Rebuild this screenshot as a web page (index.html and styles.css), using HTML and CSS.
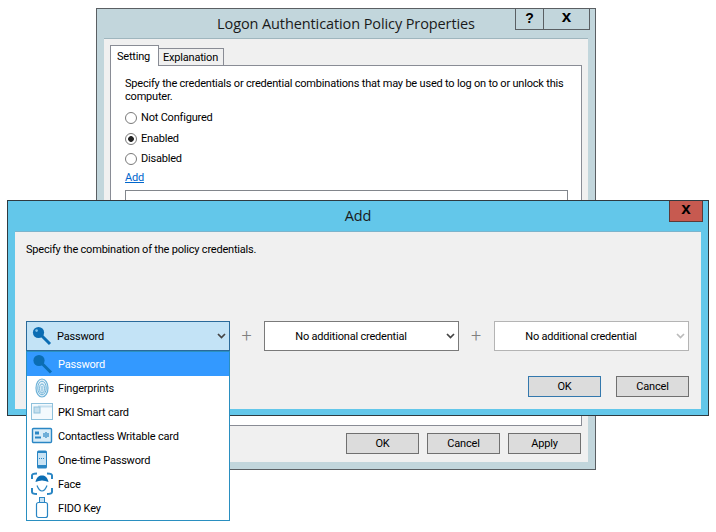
FILE: index.html
```html
<!DOCTYPE html>
<html lang="en">
<head>
<meta charset="utf-8">
<title>Logon Authentication Policy Properties</title>
<link rel="stylesheet" href="styles.css">
</head>
<body>
<div class="window window-back">
  <div class="titlebar titlebar-back">
    <span class="title">Logon Authentication Policy Properties</span>
    <div class="caption-buttons">
      <span class="caption-btn caption-help">?</span>
      <span class="caption-btn caption-close">x</span>
    </div>
  </div>
  <div class="panel panel-back">
    <div class="tabs">
      <span class="tab tab-active">Setting</span>
      <span class="tab">Explanation</span>
    </div>
    <div class="tab-body">
      <p class="desc">Specify the credentials or credential combinations that may be used to log on to or unlock this computer.</p>
      <div class="radio-row first"><span class="radio"></span>Not Configured</div>
      <div class="radio-row"><span class="radio radio-on"></span>Enabled</div>
      <div class="radio-row tight"><span class="radio"></span>Disabled</div>
      <a class="link" href="#">Add</a>
      <div class="listbox"></div>
    </div>
    <div class="footer footer-back">
      <button class="btn">OK</button>
      <button class="btn">Cancel</button>
      <button class="btn">Apply</button>
    </div>
  </div>
</div>

<div class="window window-add">
  <div class="titlebar titlebar-add">
    <span class="title">Add</span>
    <span class="add-close">x</span>
  </div>
  <div class="panel panel-add">
    <p class="add-desc">Specify the combination of the policy credentials.</p>
    <div class="combo-row">
      <div class="combo combo-open">
        <svg class="combo-key" width="20" height="20" viewBox="0 0 20 20"><circle cx="6.5" cy="6.5" r="5.6" fill="#0b6db3"/><circle cx="4.6" cy="4.6" r="1.3" fill="#7fc0e8"/><path d="M9.5 9.5L18 18" stroke="#0b6db3" stroke-width="3" fill="none"/></svg>
        <span class="combo-label">Password</span>
        <svg class="chev" width="9" height="6" viewBox="0 0 9 6"><path d="M1 1l3.500 3.500L8 1" stroke="#444" stroke-width="1.700" fill="none"/></svg>
        <ul class="dropdown">
          <li class="opt opt-selected">
            <span class="opt-icon"><svg width="24" height="24" viewBox="0 0 24 24"><circle cx="9" cy="8.500" r="5.600" fill="#0b6db3"/><path d="M12 11.500l9 9" stroke="#0b6db3" stroke-width="3" fill="none"/></svg></span>
            Password
          </li>
          <li class="opt">
            <span class="opt-icon"><svg width="24" height="24" viewBox="0 0 24 24" fill="none" stroke="#6fb3d8"><ellipse cx="12" cy="12" rx="6" ry="9" fill="#e4f1f9" stroke-width="1.200"/><ellipse cx="12" cy="12" rx="4.200" ry="6.800" stroke-width="1"/><ellipse cx="12" cy="12.500" rx="2.400" ry="4.500" stroke-width="1"/><path d="M12 10v5.500" stroke-width="1"/></svg></span>
            Fingerprints
          </li>
          <li class="opt">
            <span class="opt-icon"><svg width="24" height="24" viewBox="0 0 24 24"><rect x="1.500" y="3.500" width="21" height="16" fill="#f3f9fd" stroke="#8fc1dc"/><path d="M8 6.500h14" stroke="#c5dfee" stroke-width="2"/><rect x="4" y="7" width="6" height="6" fill="#c5dfee" stroke="#8fc1dc"/></svg></span>
            PKI Smart card
          </li>
          <li class="opt">
            <span class="opt-icon"><svg width="24" height="24" viewBox="0 0 24 24"><rect x="2.500" y="4.500" width="19" height="14" rx="1" fill="#d9ecf8" stroke="#2a86c4" stroke-width="1.400"/><rect x="5" y="7.500" width="4" height="3" fill="#2a86c4"/><path d="M5 13.500h6" stroke="#2a86c4" stroke-width="2"/><path d="M14 9v4M16 8v6M18 9v4" stroke="#2a86c4" stroke-width="1.200"/></svg></span>
            Contactless Writable card
          </li>
          <li class="opt">
            <span class="opt-icon"><svg width="24" height="24" viewBox="0 0 24 24"><rect x="7" y="2.500" width="10" height="18" rx="1.500" fill="#2a86c4"/><rect x="8" y="5" width="8" height="12" fill="#c9e3f4"/><path d="M9 10.500h6" stroke="#2a86c4" stroke-dasharray="1 1"/></svg></span>
            One-time Password
          </li>
          <li class="opt">
            <span class="opt-icon"><svg width="24" height="24" viewBox="0 0 24 24" fill="none"><path d="M2 7V3.500C2 2.500 3 1.500 7 1.500M17 1.500C21 1.500 22 2.500 22 3.500V7M2 16V20C2 21 3 22 7 22M17 22C21 22 22 21 22 20V16" stroke="#2a86c4" stroke-width="2"/><path d="M5.500 10C6.500 5 9 3.500 12 3.500S17.500 5 18.500 10C14 8 10 8 5.500 10Z" fill="#0b6db3"/><path d="M7 13.500C8.500 17.500 10 19 12 19S15.500 17.500 17 13.500" stroke="#2a86c4" stroke-width="1.200"/></svg></span>
            Face
          </li>
          <li class="opt">
            <span class="opt-icon"><svg width="24" height="24" viewBox="0 0 24 24" fill="none" stroke="#2a86c4"><rect x="9.500" y="1.500" width="5" height="5" fill="#c9e3f4"/><rect x="6.500" y="6.500" width="11" height="15" rx="2" fill="#fff" stroke-width="1.200"/></svg></span>
            FIDO Key
          </li>
        </ul>
      </div>
      <span class="plus">+</span>
      <div class="combo combo-plain">
        <span class="combo-center">No additional credential</span>
        <svg class="chev" width="9" height="6" viewBox="0 0 9 6"><path d="M1 1l3.500 3.500L8 1" stroke="#444" stroke-width="1.700" fill="none"/></svg>
      </div>
      <span class="plus">+</span>
      <div class="combo combo-plain combo-disabled">
        <span class="combo-center">No additional credential</span>
        <svg class="chev" width="9" height="6" viewBox="0 0 9 6"><path d="M1 1l3.500 3.500L8 1" stroke="#bbb" stroke-width="1.700" fill="none"/></svg>
      </div>
    </div>
    <div class="footer footer-add">
      <button class="btn btn-default">OK</button>
      <button class="btn">Cancel</button>
    </div>
  </div>
</div>
</body>
</html>
```

FILE: styles.css
```css
* { box-sizing: border-box; }
html, body { margin: 0; padding: 0; }
body {
  width: 716px;
  height: 532px;
  background: #fff;
  position: relative;
  overflow: hidden;
  font-family: "Roboto", "Liberation Sans", sans-serif;
  font-size: 11px;
  letter-spacing: -0.2px;
  color: #000;
}
.window { position: absolute; display: flex; flex-direction: column; }
.window-back {
  left: 96px; top: 8px; width: 500px; height: 462px;
  background: #c2d6dc;
  border: 1px solid #5a5f63;
  padding: 0 7px 7px;
}
.window-add {
  left: 7px; top: 200px; width: 702px; height: 216px;
  background: #63c7ea;
  border: 1px solid #2f3a40;
  padding: 0 7px 7px;
}
.titlebar { position: relative; display: flex; justify-content: center; align-items: center; flex: none; }
.titlebar-back { height: 29px; }
.titlebar-add { height: 30px; padding-bottom: 2px; }
.title { font-family: "Open Sans", sans-serif; font-size: 14.5px; letter-spacing: -0.1px; color: #1a1a1a; }
.caption-buttons {
  position: absolute; right: -2px; top: -1px;
  display: flex; height: 22px;
  border: 1px solid #5a5f63; border-top: 0;
}
.caption-btn { display: flex; align-items: center; justify-content: center; font-family: "Liberation Sans", sans-serif; font-weight: 700; font-size: 14px; letter-spacing: 0; }
.caption-help { width: 28px; border-right: 1px solid #5a5f63; padding-bottom: 2px; }
.caption-close { width: 45px; padding-bottom: 4px; font-size: 17px; }
.add-close {
  position: absolute; right: -2px; top: 0; width: 34px; height: 21px;
  background: #c75a50; border: 1px solid #5c3a38; border-top: 0;
  display: flex; align-items: center; justify-content: center;
  font-family: "Liberation Sans", sans-serif; font-weight: 700; font-size: 17px; padding-bottom: 4px; letter-spacing: 0;
}
.panel { flex: 1; background: #f0f0f0; display: flex; flex-direction: column; border-top: 1px solid #9fb6be; }
.panel-add { border-top-color: #7cb4cc; padding: 11px 12px 12px 11px; }
.panel-back { padding: 7px 6px 8px; }
.tabs { display: flex; align-items: flex-end; height: 20px; flex: none; position: relative; z-index: 1; margin-bottom: -1px; }
.tab {
  height: 18px; padding: 1px 4px 0; background: #f0f0f0;
  border: 1px solid #898c95; border-left: 0;
  display: flex; align-items: center; width: 65px;
}
.tab-active {
  height: 21px; width: 49px; background: #fff; border-left: 1px solid #898c95; border-bottom: 0;
  padding: 0 6px;
}
.tab-body { flex: 1; background: #fff; border: 1px solid #898c95; padding: 11px 14px 0; overflow: hidden; }
.desc { margin: 0; line-height: 13px; width: 445px; }
.radio-row { display: flex; align-items: center; height: 14px; margin-top: 7px; line-height: 14px; }
.radio-row.first { margin-top: 8px; }
.radio-row.tight { margin-top: 6px; }
.radio {
  width: 12px; height: 12px; border-radius: 50%; border: 1px solid #7a7a7a; background: #fff;
  margin-right: 4px; flex: none;
}
.radio-on { background: radial-gradient(circle, #222 0 2.500px, #fff 3.200px); }
.link { display: block; margin-top: 5px; color: #0066cc; text-decoration: underline; width: fit-content; line-height: 14px; }
.listbox { margin-top: 5px; width: 443px; height: 200px; border: 1px solid #82868c; background: #fff; }
.footer { display: flex; flex: none; }
.footer-back { justify-content: flex-end; gap: 8px; margin-top: 7px; padding-right: 1px; }
.footer-add { justify-content: flex-end; gap: 15px; margin-top: 25px; }
.btn {
  width: 73px; height: 21px; padding: 0; background: #dcdcdc; border: 1px solid #707070;
  font: inherit; letter-spacing: inherit; color: #000;
}
.btn-default { border-color: #3378ad; }
.add-desc { margin: 0; line-height: 14px; flex: none; }
.combo-row { display: flex; margin-top: 64px; flex: none; }
.combo { height: 30px; position: relative; display: flex; align-items: center; flex: none; }
.combo-open { width: 204px; background: #c3e3f6; border: 1px solid #2a6a9a; padding-left: 5px; }
.combo-plain { width: 195px; background: #fff; border: 1px solid #7a7a7a; }
.combo-disabled { border-color: #b4b4b4; }
.combo-key { flex: none; }
.combo-label { margin-left: 5px; }
.combo-center { flex: 1; text-align: center; padding-right: 21px; }
.chev { position: absolute; right: 3px; top: 11px; }
.plus { width: 35px; flex: none; text-align: center; font-size: 18px; color: #808080; font-weight: 300; line-height: 30px; padding-right: 1px; }
.combo-open + .plus { width: 34px; }
.dropdown {
  position: absolute; left: -1px; top: 29px; width: 204px; height: 170px;
  margin: 0; padding: 0; list-style: none; background: #fff;
  border: 1px solid #2a8fc0; z-index: 5;
}
.opt { height: 24px; display: flex; align-items: center; }
.opt-icon { width: 24px; height: 24px; margin: 0 4px 0 3px; flex: none; display: block; }
.opt-icon svg { display: block; }
.opt-selected { background: #3399ff; color: #fff; }
```
